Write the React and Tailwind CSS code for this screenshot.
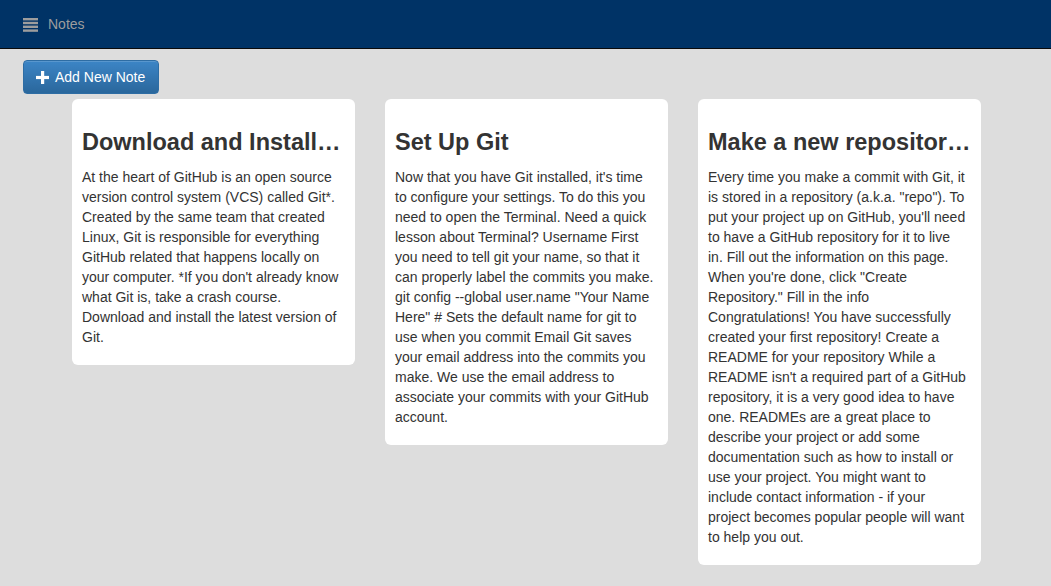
const notes = [
  {
    title: 'Download and Install Git',
    lines: [
      'At the heart of GitHub is an open source',
      'version control system (VCS) called Git*.',
      'Created by the same team that created',
      'Linux, Git is responsible for everything',
      'GitHub related that happens locally on',
      "your computer. *If you don't already know",
      'what Git is, take a crash course.',
      'Download and install the latest version of',
      'Git.',
    ],
  },
  {
    title: 'Set Up Git',
    lines: [
      "Now that you have Git installed, it's time",
      'to configure your settings. To do this you',
      'need to open the Terminal. Need a quick',
      'lesson about Terminal? Username First',
      'you need to tell git your name, so that it',
      'can properly label the commits you make.',
      'git config --global user.name "Your Name',
      'Here" # Sets the default name for git to',
      'use when you commit Email Git saves',
      'your email address into the commits you',
      'make. We use the email address to',
      'associate your commits with your GitHub',
      'account.',
    ],
  },
  {
    title: 'Make a new repository on GitHub',
    lines: [
      'Every time you make a commit with Git, it',
      'is stored in a repository (a.k.a. "repo"). To',
      "put your project up on GitHub, you'll need",
      'to have a GitHub repository for it to live',
      'in. Fill out the information on this page.',
      'When you\'re done, click "Create',
      'Repository." Fill in the info',
      'Congratulations! You have successfully',
      'created your first repository! Create a',
      'README for your repository While a',
      "README isn't a required part of a GitHub",
      'repository, it is a very good idea to have',
      'one. READMEs are a great place to',
      'describe your project or add some',
      'documentation such as how to install or',
      'use your project. You might want to',
      'include contact information - if your',
      'project becomes popular people will want',
      'to help you out.',
    ],
  },
];

function NoteCard({ note }) {
  return (
    <div className="w-[283px] bg-white rounded-[6px] p-[10px]">
      <h2 className="mt-[21px] mb-[11px] text-[23.5px] font-bold leading-[1.1] text-[#333] truncate">
        {note.title}
      </h2>
      <p className="mb-[8px] text-[14px] leading-[20px] text-[#333]">
        {note.lines.map((l, i) => (
          <span key={i}>
            {l}
            {i < note.lines.length - 1 && <br />}
          </span>
        ))}
      </p>
    </div>
  );
}

export default function App() {
  return (
    <div className="min-h-[586px] bg-[#dddddd] font-['Liberation_Sans',Arial,sans-serif]">
      <nav className="h-[49px] bg-[#003366] border-b border-[#0a0a0a] flex items-center pl-[23px]">
        <svg width="15" height="14" viewBox="0 0 15 14" className="mr-[10px] mt-[1px]">
          <rect x="0" y="0" width="15" height="2.4" fill="#9d9d9d" />
          <rect x="0" y="3.8" width="15" height="2.4" fill="#9d9d9d" />
          <rect x="0" y="7.6" width="15" height="2.4" fill="#9d9d9d" />
          <rect x="0" y="11.4" width="15" height="2.4" fill="#9d9d9d" />
        </svg>
        <span className="text-[14px] text-[#9d9d9d] mt-[1px]">Notes</span>
      </nav>
      <div className="pl-[23px] pt-[11px]">
        <button className="h-[34px] pl-[12px] pr-[13px] flex items-center gap-[6px] rounded-[4px] border border-[#2e6da4] bg-gradient-to-b from-[#3c85c6] to-[#2a679c] text-white text-[14px] shadow-[inset_0_1px_0_rgba(255,255,255,0.15)]">
          <svg width="13" height="13" viewBox="0 0 13 13">
            <rect x="5" y="0" width="3.2" height="13" fill="#fff" />
            <rect x="0" y="4.9" width="13" height="3.2" fill="#fff" />
          </svg>
          Add New Note
        </button>
      </div>
      <div className="flex items-start gap-[30px] pl-[72px] pt-[5px]">
        {notes.map((n, i) => (
          <NoteCard key={i} note={n} />
        ))}
      </div>
    </div>
  );
}
